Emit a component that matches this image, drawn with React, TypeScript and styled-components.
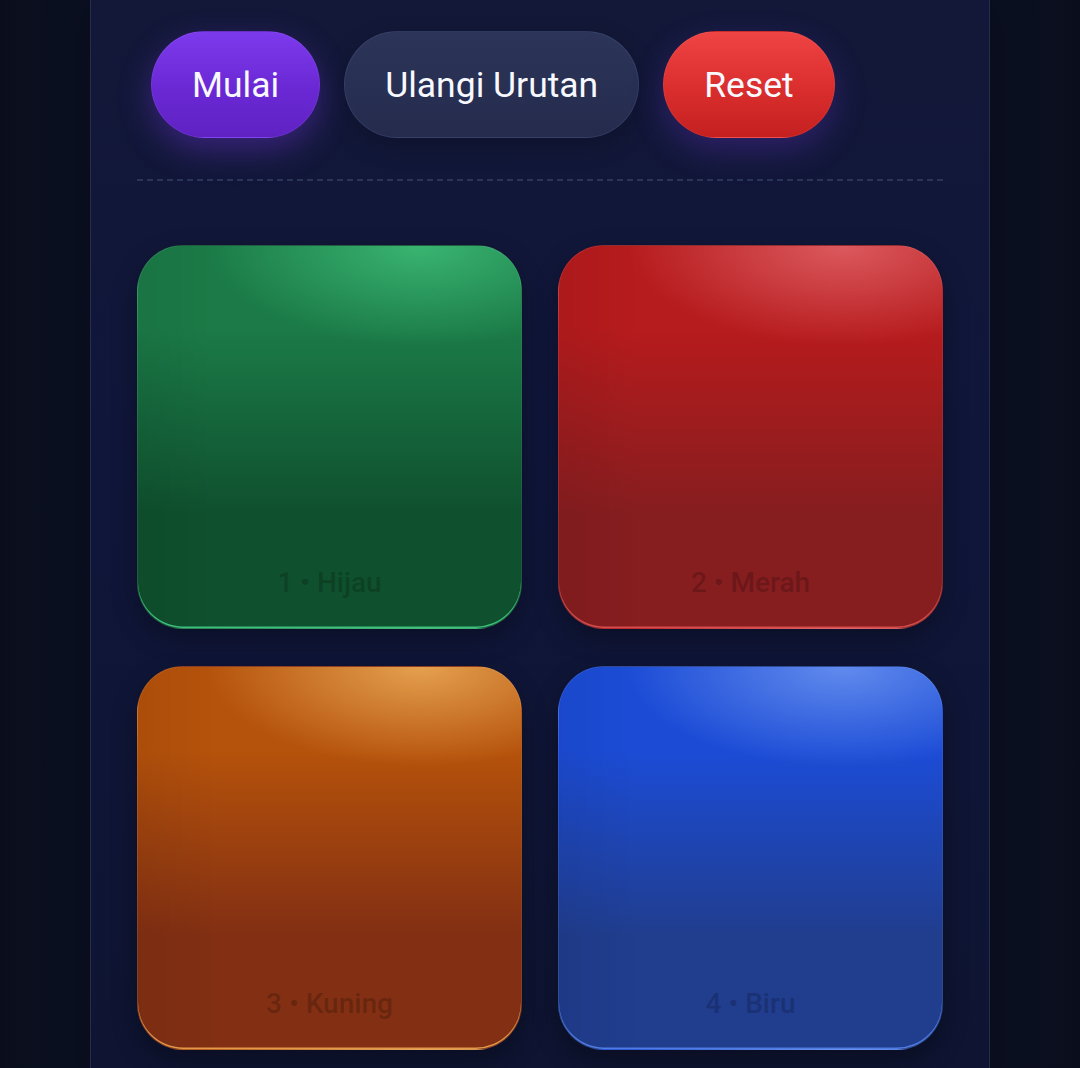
import React from "react";
import styled, { createGlobalStyle } from "styled-components";

const GlobalStyle = createGlobalStyle`
  html, body {
    margin: 0;
    padding: 0;
    background: #0a0e1c;
    font-family: Roboto, "Noto Sans", "Liberation Sans", sans-serif;
  }
  * { box-sizing: border-box; }
`;

const Page = styled.div`
  min-height: 1068px;
  background: linear-gradient(90deg, #0a0e1c 0%, #0b1022 8%, #0b1022 92%, #0a0e1c 100%);
  display: flex;
  justify-content: center;
  overflow: hidden;
`;

const Panel = styled.section`
  width: 900px;
  padding: 31px 46px 46px;
  background: linear-gradient(180deg, #131838 0%, #10163a 40%, #0e1431 100%);
  border: 1px solid #262d4d;
  border-top: none;
  box-shadow: 0 0 40px rgba(0, 0, 0, 0.35);
`;

const Controls = styled.div`
  display: flex;
  gap: 24px;
  padding-left: 14px;
`;

type Tone = "primary" | "ghost" | "danger";

const toneBg: Record<Tone, string> = {
  primary: "linear-gradient(180deg, #7c3aed 0%, #6a28d4 55%, #5f22c2 100%)",
  ghost: "linear-gradient(180deg, #2c3559 0%, #242b4d 100%)",
  danger: "linear-gradient(180deg, #ef4444 0%, #dc2f2f 50%, #c52020 100%)",
};

const toneShadow: Record<Tone, string> = {
  primary: "0 12px 32px rgba(124, 58, 237, 0.36)",
  ghost: "0 8px 24px rgba(0, 0, 0, 0.22)",
  danger: "0 12px 32px rgba(108, 56, 220, 0.3)",
};

const Pill = styled.button<{ $tone: Tone }>`
  height: 107px;
  padding: 0 40px;
  border-radius: 54px;
  border: 1px solid ${(p) => (p.$tone === "ghost" ? "rgba(120, 140, 200, 0.14)" : "rgba(255, 255, 255, 0.06)")};
  background: ${(p) => toneBg[p.$tone]};
  box-shadow: ${(p) => toneShadow[p.$tone]};
  color: #f8f8ff;
  font-family: Roboto, "Noto Sans", sans-serif;
  font-size: 35.5px;
  font-weight: 400;
  cursor: pointer;
`;

const Divider = styled.hr`
  margin: 41px 0 64px;
  border: none;
  border-top: 2px dashed rgba(120, 134, 176, 0.26);
`;

const Board = styled.div`
  display: grid;
  grid-template-columns: 385px 385px;
  grid-auto-rows: 384px;
  column-gap: 36px;
  row-gap: 37px;
`;

type PadColor = {
  top: string;
  bottom: string;
  glow: string;
  rim: string;
};

const Pad = styled.button<{ $c: PadColor }>`
  display: flex;
  align-items: flex-end;
  justify-content: center;
  padding: 0 0 29px;
  border-radius: 46px;
  border: 1px solid rgba(255, 255, 255, 0.08);
  background:
    radial-gradient(ellipse 56% 26% at 74% 0%, ${(p) => p.$c.glow} 0%, transparent 100%),
    linear-gradient(90deg, rgba(0, 0, 0, 0.05) 0%, transparent 20%),
    linear-gradient(180deg, ${(p) => p.$c.top} 0%, ${(p) => p.$c.top} 22%, ${(p) => p.$c.bottom} 70%, ${(p) => p.$c.bottom} 100%);
  box-shadow:
    inset 0 -1.5px 0 ${(p) => p.$c.rim},
    0 10px 26px rgba(0, 0, 0, 0.3);
  cursor: pointer;
`;

const PadLabel = styled.span`
  font-family: Roboto, "Noto Sans", sans-serif;
  font-size: 28px;
  font-weight: 500;
  color: rgba(0, 0, 0, 0.2);
`;

const pads: { label: string; c: PadColor }[] = [
  {
    label: "1 • Hijau",
    c: { top: "#1b7a47", bottom: "#0f502e", glow: "rgba(70, 205, 130, 0.7)", rim: "#3cc07c" },
  },
  {
    label: "2 • Merah",
    c: { top: "#b61b1d", bottom: "#861d1f", glow: "rgba(232, 110, 115, 0.75)", rim: "#d64c4c" },
  },
  {
    label: "3 • Kuning",
    c: { top: "#b5520b", bottom: "#822f13", glow: "rgba(240, 180, 95, 0.8)", rim: "#e09a4a" },
  },
  {
    label: "4 • Biru",
    c: { top: "#1c4cd6", bottom: "#203d8e", glow: "rgba(120, 160, 245, 0.75)", rim: "#4f7de0" },
  },
];

const App = () => {
  return (
    <Page>
      <GlobalStyle />
      <Panel>
        <Controls>
          <Pill $tone="primary">Mulai</Pill>
          <Pill $tone="ghost">Ulangi Urutan</Pill>
          <Pill $tone="danger">Reset</Pill>
        </Controls>
        <Divider />
        <Board>
          {pads.map((p) => (
            <Pad key={p.label} $c={p.c}>
              <PadLabel>{p.label}</PadLabel>
            </Pad>
          ))}
        </Board>
      </Panel>
    </Page>
  );
};

export default App;
